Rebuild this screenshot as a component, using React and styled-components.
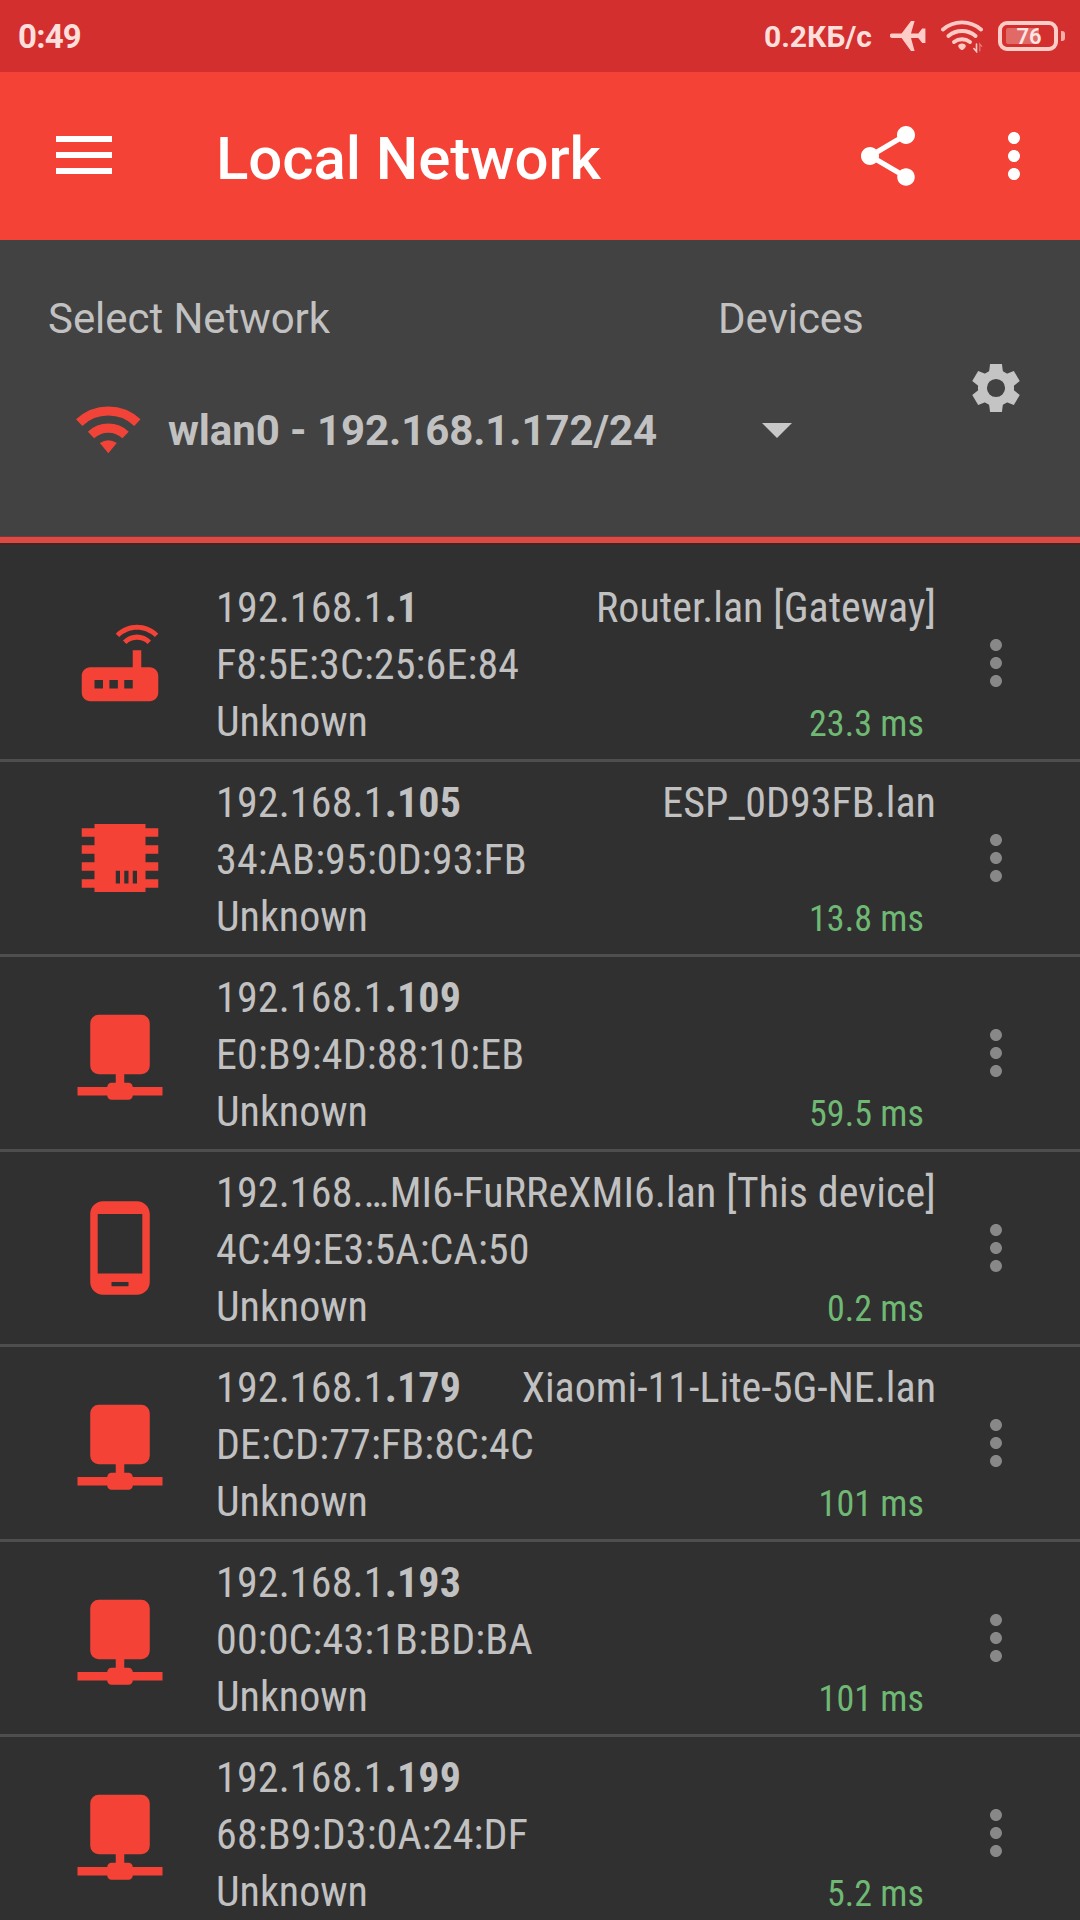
import React from "react";
import styled, { createGlobalStyle } from "styled-components";
import { MdRouter, MdPhoneAndroid, MdMoreVert, MdShare } from "react-icons/md";

const GlobalStyle = createGlobalStyle`
  * { box-sizing: border-box; }
  body {
    margin: 0;
    background: #303030;
    color: #c1c1c1;
    font-family: Roboto, sans-serif;
  }
  svg { display: block; flex: none; }
`;

const Screen = styled.main`
  width: 1080px;
  height: 1920px;
  overflow: hidden;
  display: flex;
  flex-direction: column;
  background: #303030;
`;

const StatusBar = styled.header`
  flex: none;
  height: 72px;
  padding: 0 15px 0 18px;
  display: flex;
  align-items: center;
  justify-content: space-between;
  background: #d32f2f;
  color: #ffdfdb;
`;

const Clock = styled.time`
  font-size: 33px;
  line-height: 38px;
  font-weight: 700;
  letter-spacing: -0.8px;
  padding-top: 2px;
`;

const StatusGroup = styled.div`
  display: flex;
  align-items: center;
`;

const Speed = styled.span`
  padding-top: 2px;
  font-size: 30px;
  line-height: 36px;
  font-weight: 700;
  margin-right: 18px;
`;

const StatusGap = styled.span`
  width: 15px;
`;

const Battery = styled.div`
  display: flex;
  align-items: center;
  gap: 3px;
  margin-left: 15px;
`;

const BatteryBody = styled.div`
  width: 60px;
  height: 30px;
  display: flex;
  align-items: center;
  justify-content: center;
  border: 4px solid #ffcdc8;
  border-radius: 9px;
  padding: 3px 4px;
`;

const BatteryLevel = styled.div`
  flex: 1;
  height: 16px;
  padding: 1px 0 0 2px;
  display: flex;
  align-items: center;
  justify-content: center;
  border-radius: 2px;
  background: linear-gradient(90deg, #e16a67 76%, transparent 76%);
  color: #ffe6e2;
  font-size: 22px;
  line-height: 16px;
  font-weight: 600;
`;

const BatteryTip = styled.div`
  width: 4px;
  height: 10px;
  border-radius: 0 3px 3px 0;
  background: #f3aea9;
`;

const Toolbar = styled.nav`
  flex: none;
  height: 168px;
  padding: 0 30px 0 56px;
  display: flex;
  align-items: center;
  background: #f44336;
  color: #fff;
`;

const MenuLines = styled.div`
  width: 56px;
  display: grid;
  gap: 10px;
  margin: 0 104px 2px 0;
`;

const MenuLine = styled.span`
  height: 6px;
  background: #fff;
`;

const Title = styled.h1`
  flex: 1;
  margin: 0;
  padding-top: 5px;
  font-size: 60px;
  line-height: 70px;
  font-weight: 500;
  letter-spacing: -0.1px;
`;

const ToolbarActions = styled.div`
  display: flex;
  gap: 54px;
`;

const NetworkPanel = styled.section`
  flex: none;
  height: 297px;
  display: flex;
  align-items: center;
  padding: 0 48px;
  background: #424242;
  border-bottom: 1px solid #74393a;
`;

const NetworkMain = styled.div`
  flex: 1;
  align-self: stretch;
  padding-top: 54px;
`;

const Labels = styled.div`
  display: grid;
  grid-template-columns: 670px 1fr;
  font-size: 42px;
  line-height: 49px;
  letter-spacing: -0.06px;
`;

const Selector = styled.div`
  height: 72px;
  margin-top: 51px;
  padding-left: 28px;
  display: flex;
  align-items: center;
`;

const SelectedName = styled.span`
  width: 594px;
  margin-left: 27px;
  font-size: 42px;
  line-height: 49px;
  font-weight: 700;
  letter-spacing: -0.07px;
  white-space: nowrap;
`;

const Caret = styled.span`
  border: 15px solid transparent;
  border-top-color: #c8c8c8;
  border-bottom: 0;
`;

const GearSlot = styled.div`
  width: 72px;
  display: flex;
  justify-content: center;
`;

const AccentLine = styled.div`
  flex: none;
  height: 8px;
  background: #dc4b43;
  border-bottom: 2px solid #472322;
`;

const DeviceList = styled.ul`
  list-style: none;
  margin: 0;
  padding: 22px 0 0;
`;

const DeviceRow = styled.li`
  height: 195px;
  display: flex;
  border-bottom: 3px solid #4e4e4e;
`;

const DeviceIcon = styled.div`
  width: 216px;
  padding-right: 24px;
  padding-left: 48px;
  display: flex;
  align-items: center;
  justify-content: center;
  color: #f44336;
`;

const DeviceInfo = styled.div`
  width: 720px;
  padding-top: 12px;
  font-family: "Roboto Condensed", Roboto, sans-serif;
  font-size: 42px;
  line-height: 57px;
  white-space: nowrap;
`;

const InfoLine = styled.div`
  height: 57px;
  display: flex;
  justify-content: space-between;
`;

const Address = styled.span`
  letter-spacing: 0.15px;
`;

const HostName = styled.span`
  letter-spacing: ${(p) => (p.$long ? "0.1px" : "0.02px")};
`;

const Latency = styled.span`
  padding-right: 12px;
  font-size: 36px;
  line-height: 63px;
  letter-spacing: 0.05px;
  color: #6fb974;
`;

const RowMenu = styled.div`
  width: 120px;
  display: flex;
  align-items: center;
  justify-content: center;
  color: #888;
`;

const Airplane = () => (
  <svg width="36" height="30" viewBox="0 0 36 30" fill="#ffcdc8">
    <path d="M2 12.5 H11.6 L21 0 H24.6 L21 12.5 H28.3 L32.2 7.4 H35.4 V22 H32.2 L28.3 16.9 H21 L24.6 30 H21 L11.6 16.9 H2 A2.2 2.2 0 0 1 2 12.5Z" />
  </svg>
);

const StatusWifi = () => (
  <svg width="42" height="34" viewBox="0 0 42 34" fill="none" stroke="#ffc9c4" strokeWidth="3.9" strokeLinecap="round">
    <path d="M2 10.5 A29 29 0 0 1 40 10.5" />
    <path d="M7.4 17 A21 21 0 0 1 34.6 17" />
    <path d="M13 23 A13 13 0 0 1 29 23" />
    <path d="M21 24.6c2 0 3.8 1.1 3.8 2.4S22.6 31 21 31s-3.8-2.7-3.8-4 1.8-2.4 3.8-2.4z" fill="#ffc9c4" stroke="none" />
    <path d="M35.5 25v7.5l-2.6-3" strokeWidth="1.6" />
    <path d="M38.8 32v-7l2 2.4" strokeWidth="1.2" stroke="#e37b76" />
  </svg>
);

const NetworkWifi = () => (
  <svg width="65" height="48" viewBox="0 0 65 48" fill="none" stroke="#f14337" strokeWidth="9.2">
    <path d="M3.2 16.6 A42.3 42.3 0 0 1 61.4 16.6" />
    <path d="M15 29 A25.2 25.2 0 0 1 49.6 29" />
    <path d="M32.3 47.3 L23.8 36.9 Q32.3 31.4 40.8 36.9 Z" fill="#f14337" stroke="none" />
  </svg>
);

const Gear = () => (
  <svg width="48" height="48" viewBox="-24 -24 48 48" fill="#c4c4c4">
    <circle r="13.6" fill="none" stroke="#c4c4c4" strokeWidth="9" />
    {[0, 60, 120, 180, 240, 300].map((angle) => (
      <path key={angle} transform={`rotate(${angle})`} d="M-5.9 -24 H5.9 L7.4 -13 L5 -11 H-5 L-7.4 -13Z" />
    ))}
  </svg>
);

const Host = () => (
  <svg width="102" height="102" viewBox="0 0 24 24" fill="currentColor">
    <path d="M17 3A2 2 0 0 1 19 5V15A2 2 0 0 1 17 17H13V19H14A1 1 0 0 1 15 20H22V22H15A1 1 0 0 1 14 23H10A1 1 0 0 1 9 22H2V20H9A1 1 0 0 1 10 19H11V17H7A2 2 0 0 1 5 15V5A2 2 0 0 1 7 3Z" />
  </svg>
);

const Chip = () => (
  <svg width="102" height="102" viewBox="0 0 24 24" fill="currentColor" fillRule="evenodd">
    <path d="M6 4H18V5H21V7H18V9H21V11H18V13H21V15H18V17H21V19H18V20H6V19H3V17H6V15H3V13H6V11H3V9H6V7H3V5H6Z M11 15V18H12V15Z M13 15V18H14V15Z M15 15V18H16V15Z" />
  </svg>
);

const Router = () => <MdRouter size={102} />;
const Phone = () => <MdPhoneAndroid size={102} />;

const devices = [
  { icon: Router, subnet: "192.168.1", host: ".1", name: "Router.lan [Gateway]", mac: "F8:5E:3C:25:6E:84", latency: "23.3 ms" },
  { icon: Chip, subnet: "192.168.1", host: ".105", name: "ESP_0D93FB.lan", mac: "34:AB:95:0D:93:FB", latency: "13.8 ms" },
  { icon: Host, subnet: "192.168.1", host: ".109", name: "", mac: "E0:B9:4D:88:10:EB", latency: "59.5 ms" },
  { icon: Phone, subnet: "192.168.…", host: "", name: "MI6-FuRReXMI6.lan [This device]", mac: "4C:49:E3:5A:CA:50", latency: "0.2 ms" },
  { icon: Host, subnet: "192.168.1", host: ".179", name: "Xiaomi-11-Lite-5G-NE.lan", mac: "DE:CD:77:FB:8C:4C", latency: "101 ms" },
  { icon: Host, subnet: "192.168.1", host: ".193", name: "", mac: "00:0C:43:1B:BD:BA", latency: "101 ms" },
  { icon: Host, subnet: "192.168.1", host: ".199", name: "", mac: "68:B9:D3:0A:24:DF", latency: "5.2 ms" },
];

export default function App() {
  return (
    <>
      <GlobalStyle />
      <Screen>
        <StatusBar>
          <Clock>0:49</Clock>
          <StatusGroup>
            <Speed>0.2КБ/с</Speed>
            <Airplane />
            <StatusGap />
            <StatusWifi />
            <Battery>
              <BatteryBody>
                <BatteryLevel>76</BatteryLevel>
              </BatteryBody>
              <BatteryTip />
            </Battery>
          </StatusGroup>
        </StatusBar>
        <Toolbar>
          <MenuLines>
            <MenuLine />
            <MenuLine />
            <MenuLine />
          </MenuLines>
          <Title>Local Network</Title>
          <ToolbarActions>
            <MdShare size={72} />
            <MdMoreVert size={72} />
          </ToolbarActions>
        </Toolbar>
        <NetworkPanel>
          <NetworkMain>
            <Labels>
              <span>Select Network</span>
              <span>Devices</span>
            </Labels>
            <Selector>
              <NetworkWifi />
              <SelectedName>wlan0 - 192.168.1.172/24</SelectedName>
              <Caret />
            </Selector>
          </NetworkMain>
          <GearSlot>
            <Gear />
          </GearSlot>
        </NetworkPanel>
        <AccentLine />
        <DeviceList>
          {devices.map(({ icon: Icon, ...device }) => (
            <DeviceRow key={device.mac}>
              <DeviceIcon>
                <Icon />
              </DeviceIcon>
              <DeviceInfo>
                <InfoLine>
                  <Address>
                    {device.subnet}
                    <b>{device.host}</b>
                  </Address>
                  <HostName $long={device.name.length > 24}>{device.name}</HostName>
                </InfoLine>
                <InfoLine>
                  <Address>{device.mac}</Address>
                </InfoLine>
                <InfoLine>
                  <span>Unknown</span>
                  <Latency>{device.latency}</Latency>
                </InfoLine>
              </DeviceInfo>
              <RowMenu>
                <MdMoreVert size={72} />
              </RowMenu>
            </DeviceRow>
          ))}
        </DeviceList>
      </Screen>
    </>
  );
}
